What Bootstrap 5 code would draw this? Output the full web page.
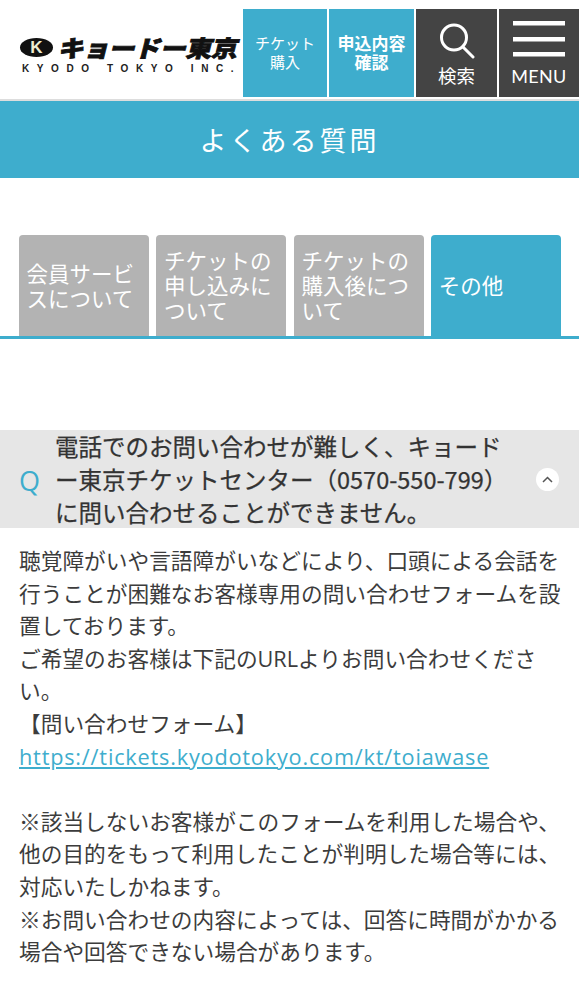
<!DOCTYPE html>
<html lang="ja"><head><meta charset="utf-8">
<link href="https://cdn.jsdelivr.net/npm/bootstrap@5.3.0/dist/css/bootstrap.min.css" rel="stylesheet">
<style>
body{font-family:"Open Sans","Noto Sans CJK JP",sans-serif;color:#3c3c3c;background:#fff;font-size:22px;overflow-x:hidden}
.hdr{height:101px;padding-top:9px;border-bottom:2px solid #ddd}
.logo-box{width:243px;padding:28px 0 0 20px;flex:none}
.logo-top{height:20px;gap:7px}
.logo-ball{width:33px;height:19px;background:#111;border-radius:50%;color:#efeccf;font:900 17px/19px "Liberation Sans",sans-serif;text-align:center;flex:none}
.logo-jp{font:900 23px/20px "Noto Sans CJK JP",sans-serif;color:#111;transform:skewX(-14deg) scaleX(1.13);transform-origin:left;white-space:nowrap;letter-spacing:-.4px;-webkit-text-stroke:.8px #111}
.logo-en{font:700 10px/12px "Liberation Sans",sans-serif;color:#222;letter-spacing:7.600px;white-space:nowrap;margin-top:6px;margin-left:2px;width:221px}
.hbtn{height:88px;color:#fff;text-align:center;flex:none;font-family:"Noto Sans CJK JP",sans-serif}
.hb1{width:84px;margin-right:2px;background:#3eadcd;font-size:15px;line-height:19px;padding-top:24px}
.hb2{width:85px;margin-right:2px;background:#3eadcd;font-size:17px;line-height:19px;padding-top:24px;font-weight:700}
.hb3{width:81px;margin-right:2px;background:#444;font-size:18.500px;line-height:20px}
.hb4{width:80px;background:#444;font-size:16px;line-height:20px}
.hb3 svg{display:block;margin:14px auto 6px}
.hb4 svg{display:block;margin:12px auto 9px}
.menu-txt{font-family:"Lato",sans-serif;font-weight:400;letter-spacing:.3px;font-size:18px}
.title-band{height:77px;background:#3eadcd;color:#fff;font-size:27px;letter-spacing:3px;line-height:77px;text-align:center;font-family:"Noto Sans CJK JP",sans-serif}
.tabs{margin-top:57px;padding:0 18px 0 19px;gap:7.8px;border-bottom:3px solid #3eadcd;height:104px}
.tabx{width:129.7px;height:101px;background:#b3b3b3;color:#fff;border-radius:4px 4px 0 0;padding:0 7.500px 2px;font-size:21.500px;line-height:25px;display:flex;align-items:center;font-family:"Noto Sans CJK JP",sans-serif}
.tabx.on{background:#3eadcd}
.qrow{margin-top:91px;height:98px;background:#e6e6e6;padding-left:19px}
.qmark{width:36px;color:#3eadcd;font:400 27px/1 "Open Sans",sans-serif;flex:none;padding-top:2px}
.qtxt{width:452px;font:400 23.500px/33px "Noto Sans CJK JP",sans-serif;color:#333;flex:none;-webkit-text-stroke:.25px #333}
.qchev{width:23px;height:23px;border-radius:50%;background:#fff;margin-left:29px;flex:none}
.atxt{padding:17px 15px 0 19px;font:400 21.700px/32.600px "Open Sans","Noto Sans CJK JP",sans-serif;color:#3c3c3c}
.atxt a{color:#3eadcd;letter-spacing:.8px}
</style></head><body>
<header class="hdr d-flex">
  <div class="logo-box">
    <div class="logo-top d-flex align-items-center"><div class="logo-ball">K</div><div class="logo-jp">キョードー東京</div></div>
    <div class="logo-en">KYODO TOKYO INC.</div>
  </div>
  <div class="hbtn hb1">チケット<br>購入</div>
  <div class="hbtn hb2">申込内容<br>確認</div>
  <div class="hbtn hb3"><svg width="36" height="36" viewBox="0 0 36 36" fill="none" stroke="#fff" stroke-width="3"><circle cx="15" cy="14.500" r="12.500"/><path d="M24 24l10 10" stroke-linecap="round"/></svg>検索</div>
  <div class="hbtn hb4"><svg width="52" height="36" viewBox="0 0 52 36" fill="#fff"><rect width="52" height="4.500" y="0"/><rect width="52" height="4.500" y="16"/><rect width="52" height="4.500" y="31"/></svg><span class="menu-txt">MENU</span></div>
</header>
<div class="title-band">よくある質問</div>
<div class="tabs d-flex align-items-end">
  <div class="tabx">会員サービスについて</div>
  <div class="tabx">チケットの申し込みについて</div>
  <div class="tabx">チケットの購入後について</div>
  <div class="tabx on">その他</div>
</div>
<div class="qrow d-flex align-items-center">
  <div class="qmark">Q</div>
  <div class="qtxt">電話でのお問い合わせが難しく、キョードー東京チケットセンター（0570-550-799）に問い合わせることができません。</div>
  <div class="qchev d-flex align-items-center justify-content-center"><svg width="11" height="7" viewBox="0 0 11 7" fill="none" stroke="#555" stroke-width="1.500"><path d="M1 6l4.500-4.500L10 6"/></svg></div>
</div>
<div class="atxt">聴覚障がいや言語障がいなどにより、口頭による会話を行うことが困難なお客様専用の問い合わせフォームを設置しております。<br>ご希望のお客様は下記のURLよりお問い合わせください。<br>【問い合わせフォーム】<br><a href="#">https://tickets.kyodotokyo.com/kt/toiawase</a><br><br>※該当しないお客様がこのフォームを利用した場合や、他の目的をもって利用したことが判明した場合等には、対応いたしかねます。<br>※お問い合わせの内容によっては、回答に時間がかかる場合や回答できない場合があります。</div>
<script src="https://cdn.jsdelivr.net/npm/bootstrap@5.3.0/dist/js/bootstrap.bundle.min.js"></script>
</body></html>
